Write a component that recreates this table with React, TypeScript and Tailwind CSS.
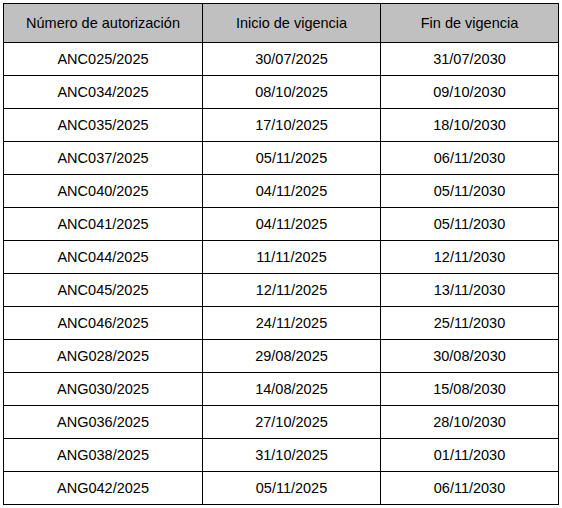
const rows: [string, string, string][] = [
  ['ANC025/2025', '30/07/2025', '31/07/2030'],
  ['ANC034/2025', '08/10/2025', '09/10/2030'],
  ['ANC035/2025', '17/10/2025', '18/10/2030'],
  ['ANC037/2025', '05/11/2025', '06/11/2030'],
  ['ANC040/2025', '04/11/2025', '05/11/2030'],
  ['ANC041/2025', '04/11/2025', '05/11/2030'],
  ['ANC044/2025', '11/11/2025', '12/11/2030'],
  ['ANC045/2025', '12/11/2025', '13/11/2030'],
  ['ANC046/2025', '24/11/2025', '25/11/2030'],
  ['ANG028/2025', '29/08/2025', '30/08/2030'],
  ['ANG030/2025', '14/08/2025', '15/08/2030'],
  ['ANG036/2025', '27/10/2025', '28/10/2030'],
  ['ANG038/2025', '31/10/2025', '01/11/2030'],
  ['ANG042/2025', '05/11/2025', '06/11/2030'],
];

const headers = ['Número de autorización', 'Inicio de vigencia', 'Fin de vigencia'];

export default function App() {
  return (
    <div className="w-[562px] h-[508px] bg-white pl-[3px] pt-[3px] text-[14.5px] text-black font-['Liberation_Sans',Arial,sans-serif]">
      <div className="grid grid-cols-[199px_178px_178px] w-[556px] border-l border-t border-black">
        {headers.map(h => (
          <div key={h} className="h-[39px] pt-[1px] flex items-center justify-center bg-[#c0c0c0] border-r border-b border-black">
            {h}
          </div>
        ))}
        {rows.map(r =>
          r.map((c, i) => (
            <div key={r[0] + i} className="h-[33px] pt-[1px] flex items-center justify-center border-r border-b border-black">
              {c}
            </div>
          ))
        )}
      </div>
    </div>
  );
}
